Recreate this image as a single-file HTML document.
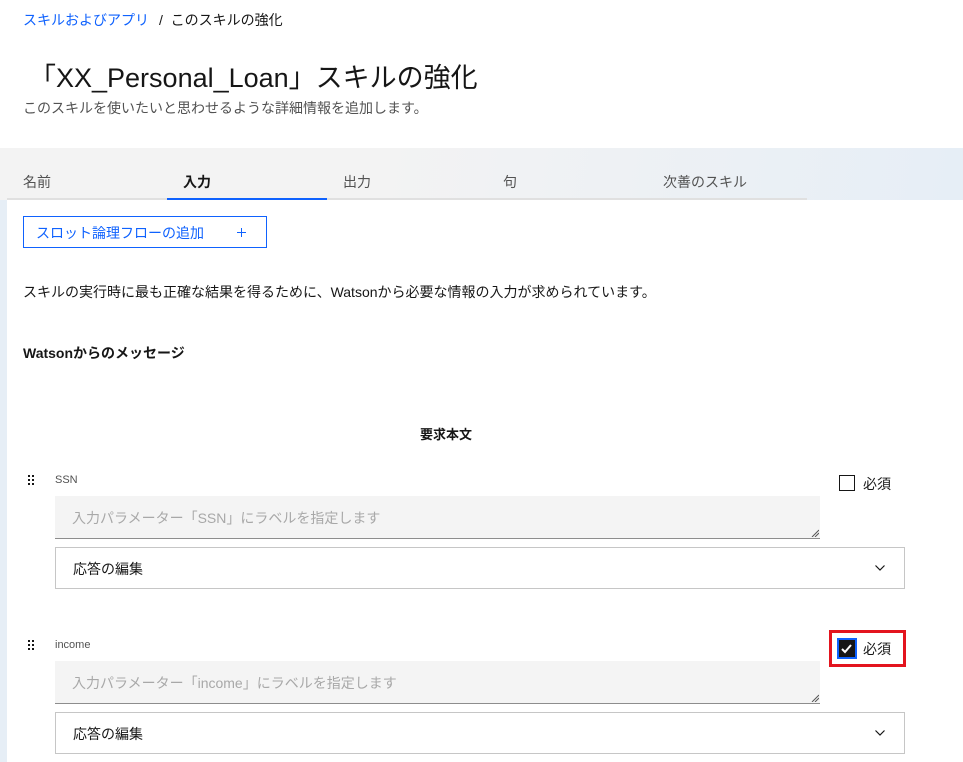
<!DOCTYPE html>
<html><head><meta charset="utf-8"><style>
*{box-sizing:border-box;margin:0;padding:0}
body{width:963px;height:762px;overflow:hidden;background:#fff;font-family:"Liberation Sans","Noto Sans CJK JP",sans-serif;color:#161616;position:relative}
.a{position:absolute;white-space:nowrap}
.band{position:absolute;left:0;top:148px;width:963px;height:52px;background:linear-gradient(100deg,#f3f3f3 40%,#e6eef6 100%)}
.strip{position:absolute;left:0;top:200px;width:7px;height:562px;background:#e6eef6}
.tab{position:absolute;top:172px;font-size:14px;color:#525252;padding-left:16px;width:160px;height:28px;border-bottom:2px solid #e0e0e0}
.ta{position:absolute;width:765px;height:43px;background:#f4f4f4;border-bottom:1px solid #8d8d8d;left:55px;font-size:14px;color:#a8a8a8;padding:12px 0 0 17px}
.ta svg{position:absolute;right:1px;bottom:1px}
.dd{position:absolute;left:55px;width:850px;height:42px;border:1px solid #c6c6c6;font-size:14px;padding:11px 0 0 17px;color:#161616}
.dd svg{position:absolute;right:19px;top:17px}
.grip{position:absolute;left:27px;width:8px;height:10px}
</style></head><body>
<div class="a" style="left:23px;top:10px;font-size:14px;color:#0f62fe">スキルおよびアプリ</div>
<div class="a" style="left:159px;top:10px;font-size:14px;color:#161616">/ &nbsp;このスキルの強化</div>
<div class="a" style="left:29px;top:56px;font-size:27px;color:#161616">「XX_Personal_Loan」スキルの強化</div>
<div class="a" style="left:23px;top:98px;font-size:14px;color:#525252">このスキルを使いたいと思わせるような詳細情報を追加します。</div>
<div class="band"></div><div class="strip"></div>
<div class="tab" style="left:7px">名前</div>
<div class="tab" style="left:167px;color:#161616;font-weight:bold;border-bottom-color:#0f62fe">入力</div>
<div class="tab" style="left:327px">出力</div>
<div class="tab" style="left:487px">句</div>
<div class="tab" style="left:647px">次善のスキル</div>
<div class="a" style="left:23px;top:216px;width:244px;height:32px;border:1px solid #0f62fe;color:#0f62fe;font-size:14px;padding:6px 0 0 12px">スロット論理フローの追加<svg style="position:absolute;left:213px;top:11px" width="9" height="9" viewBox="0 0 9 9"><path d="M4.5 0v9M0 4.5h9" stroke="#0f62fe" stroke-width="1"/></svg></div>
<div class="a" style="left:23px;top:282px;font-size:14px">スキルの実行時に最も正確な結果を得るために、Watsonから必要な情報の入力が求められています。</div>
<div class="a" style="left:23px;top:343px;font-size:14px;font-weight:bold">Watsonからのメッセージ</div>
<div class="a" style="left:420px;top:424px;font-size:13px;font-weight:bold">要求本文</div>

<svg class="grip" style="top:475px" viewBox="0 0 8 10"><g fill="#161616"><rect x="1" y="0" width="2" height="2"/><rect x="5" y="0" width="2" height="2"/><rect x="1" y="4" width="2" height="2"/><rect x="5" y="4" width="2" height="2"/><rect x="1" y="8" width="2" height="2"/><rect x="5" y="8" width="2" height="2"/></g></svg>
<div class="a" style="left:55px;top:474px;font-size:11px;color:#525252">SSN</div>
<div class="a" style="left:839px;top:475px;width:16px;height:16px;border:1px solid #161616"></div>
<div class="a" style="left:863px;top:474px;font-size:14px">必須</div>
<div class="ta" style="top:496px">入力パラメーター「SSN」にラベルを指定します<svg width="8" height="8" viewBox="0 0 8 8"><path d="M1 8L8 1M4 8L8 4" stroke="#555" stroke-width="1"/></svg></div>
<div class="dd" style="top:547px">応答の編集<svg width="10" height="6" viewBox="0 0 10 6"><path d="M0.5 0.5l4.5 4.5 4.5-4.5" fill="none" stroke="#161616" stroke-width="1.2"/></svg></div>

<svg class="grip" style="top:640px" viewBox="0 0 8 10"><g fill="#161616"><rect x="1" y="0" width="2" height="2"/><rect x="5" y="0" width="2" height="2"/><rect x="1" y="4" width="2" height="2"/><rect x="5" y="4" width="2" height="2"/><rect x="1" y="8" width="2" height="2"/><rect x="5" y="8" width="2" height="2"/></g></svg>
<div class="a" style="left:55px;top:639px;font-size:11px;color:#525252">income</div>
<div class="a" style="left:829px;top:630px;width:77px;height:37px;border:3px solid #e3141e"></div>
<div class="a" style="left:837px;top:638px;width:20px;height:21px;border:2px solid #0f62fe;background:#161616"><svg width="16" height="17" viewBox="0 0 16 17"><path d="M3 9l3 3 6-7" fill="none" stroke="#fff" stroke-width="2"/></svg></div>
<div class="a" style="left:863px;top:639px;font-size:14px">必須</div>
<div class="ta" style="top:661px">入力パラメーター「income」にラベルを指定します<svg width="8" height="8" viewBox="0 0 8 8"><path d="M1 8L8 1M4 8L8 4" stroke="#555" stroke-width="1"/></svg></div>
<div class="dd" style="top:712px">応答の編集<svg width="10" height="6" viewBox="0 0 10 6"><path d="M0.5 0.5l4.5 4.5 4.5-4.5" fill="none" stroke="#161616" stroke-width="1.2"/></svg></div>
</body></html>
